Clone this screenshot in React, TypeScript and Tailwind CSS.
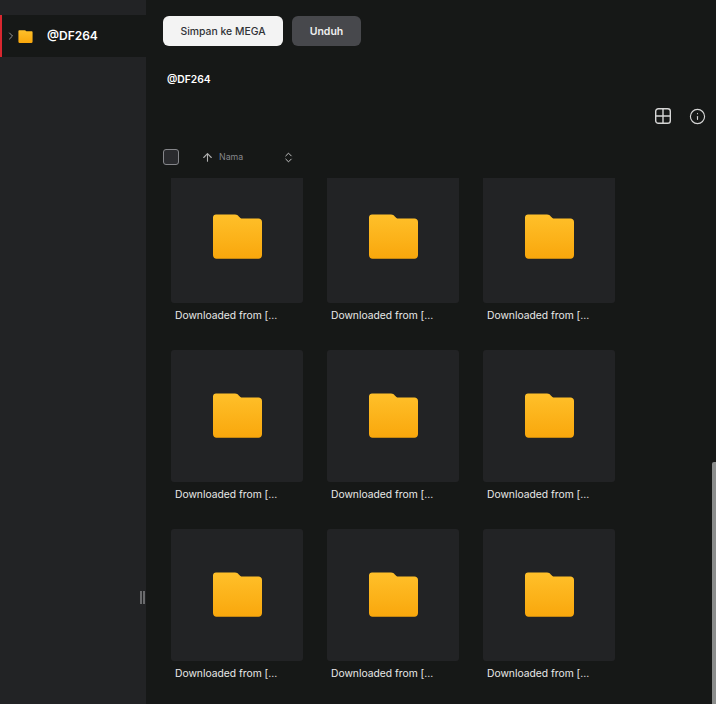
import { ArrowUp, ChevronRight, ChevronsUpDown, Info } from 'lucide-react'

const folders = Array.from({ length: 9 }, (_, i) => i)

function FolderIcon({ id, className }: { id: string; className: string }) {
  return (
    <svg viewBox="0 0 49 45" className={className}>
      <defs>
        <linearGradient id={id} x1="0" y1="0" x2="0" y2="1">
          <stop offset="0" stopColor="#ffc02a" />
          <stop offset="1" stopColor="#f9a70c" />
        </linearGradient>
      </defs>
      <path
        d="M3 0.5H22C24 0.5 24.6 1.2 25.8 2.4C27 3.6 27.6 4.5 29.5 4.5H45.5C47.5 4.5 49 6 49 8V41C49 43.2 47.5 44.7 45.5 44.7H3.5C1.5 44.7 0 43.2 0 41V3.5C0 1.8 1.3 0.5 3 0.5Z"
        fill={`url(#${id})`}
      />
    </svg>
  )
}

function GridIcon() {
  return (
    <svg viewBox="0 0 16 16" fill="none" stroke="#d6d6d6" strokeWidth="1.4" className="w-4 h-4">
      <rect x="0.7" y="0.7" width="14.6" height="14.6" rx="2.6" />
      <path d="M8 0.7V15.3M0.7 8H15.3" />
    </svg>
  )
}

export default function App() {
  return (
    <div className="relative flex h-[704px] w-[716px] overflow-hidden bg-[#161817] font-['Inter',sans-serif] text-white">
      <aside className="relative w-[146px] shrink-0 bg-[#222325] pt-[15px]">
        <div className="flex h-[42px] items-center border-l-2 border-[#d8272f] bg-[#161817]">
          <ChevronRight className="ml-[3px] h-[12px] w-[12px] text-[#b5b5b5]" strokeWidth={1.6} />
          <FolderIcon id="side-folder" className="ml-[1px] h-[13px] w-[15px]" />
          <span className="ml-[14px] text-[12px] font-semibold">@DF264</span>
        </div>
        <div className="absolute right-[1px] top-[591px] flex gap-[1px]">
          <span className="h-[13px] w-[2px] bg-[#6a6b6d]" />
          <span className="h-[13px] w-[2px] bg-[#6a6b6d]" />
        </div>
      </aside>

      <main className="flex min-w-0 flex-1 flex-col">
        <div className="flex gap-[9px] pl-[17px] pt-[16px]">
          <button className="h-[30px] w-[120px] rounded-md bg-[#f3f3f3] pt-[1px] text-[10.4px] font-medium text-[#303236]">
            Simpan ke MEGA
          </button>
          <button className="h-[30px] w-[69px] rounded-md bg-[#47484c] pt-[1px] text-[10.5px] font-semibold text-[#f0f0f0]">
            Unduh
          </button>
        </div>

        <h1 className="pl-[21px] pt-[25px] text-[10.3px] leading-[17px] font-semibold">@DF264</h1>

        <div className="flex justify-end gap-[18px] pr-[10px] pt-[20px]">
          <GridIcon />
          <Info className="h-[17px] w-[17px] text-[#d6d6d6]" strokeWidth={1.6} />
        </div>

        <div className="flex h-[16px] items-center pl-[17px] mt-[24px]">
          <span className="h-4 w-4 rounded-[3px] border border-[#85868a] bg-[#2a2b2e]" />
          <ArrowUp className="ml-[22px] h-[13px] w-[13px] text-[#b0b0b0]" strokeWidth={2} />
          <span className="ml-[5px] text-[8.8px] text-[#85868a]">Nama</span>
          <ChevronsUpDown className="ml-[39px] h-[13px] w-[13px] text-[#c6c6c6]" strokeWidth={1.8} />
        </div>

        <div className="mt-[13px] min-h-0 flex-1 overflow-hidden">
          <div className="-mt-[7px] grid w-[444px] ml-[25px] grid-cols-3 gap-x-[24px]">
            {folders.map((i) => (
              <div key={i} className="h-[179px]">
                <div className="flex h-[132px] items-center justify-center rounded-[3px] bg-[#222325] pb-[2px] pl-[1px]">
                  <FolderIcon id={`folder-${i}`} className="h-[45px] w-[49px]" />
                </div>
                <p className="pl-[4px] pt-[5px] text-[10.3px] leading-[14px] text-[#e8e8e8]">Downloaded from [...</p>
              </div>
            ))}
          </div>
        </div>
      </main>

      <div className="absolute bottom-0 right-0 top-[462px] w-[4px] rounded-tl-[2px] bg-[#8b8d8c]" />
    </div>
  )
}
